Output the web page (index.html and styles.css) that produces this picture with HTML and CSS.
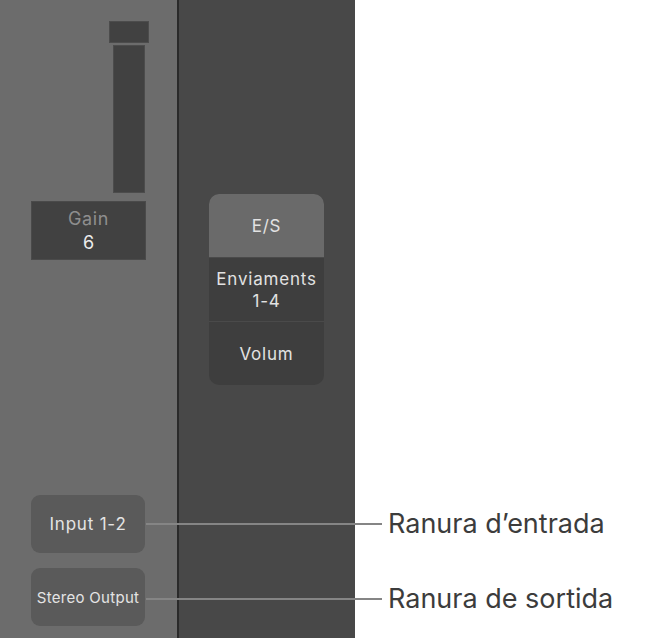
FILE: index.html
```html
<!DOCTYPE html>
<html lang="ca">
<head>
    <meta charset="UTF-8">
    <meta name="viewport" content="width=device-width, initial-scale=1.0">
    <title>Canal</title>
    <link rel="stylesheet" href="styles.css">
</head>
<body>
    <div class="stage">
        <div class="strip strip-left">
            <div class="fader">
                <div class="fader-cap"></div>
                <div class="fader-track"></div>
            </div>
            <div class="gain">
                <span class="gain-label">Gain</span>
                <span class="gain-value">6</span>
            </div>
            <div class="slots">
                <div class="slot">Input 1-2</div>
                <div class="slot slot-small">Stereo Output</div>
            </div>
        </div>

        <div class="divider"></div>

        <div class="strip strip-right">
            <div class="modes">
                <div class="mode mode-active">E/S</div>
                <div class="mode">Enviaments<br>1-4</div>
                <div class="mode">Volum</div>
            </div>
        </div>

        <!-- callouts for the two slots -->
        <div class="callout callout-in">
            <span class="leader"></span>
            <span class="callout-text">Ranura d’entrada</span>
        </div>
        <div class="callout callout-out">
            <span class="leader"></span>
            <span class="callout-text">Ranura de sortida</span>
        </div>
    </div>
</body>
</html>
```

FILE: styles.css
```css
body {
    margin: 0;
    padding: 0;
    background: #fff;
    font-family: 'Inter', 'Noto Sans', sans-serif;
}

.stage {
    position: relative;
    display: flex;
    width: 646px;
    height: 638px;
}

.strip {
    height: 638px;
    display: flex;
    flex-direction: column;
    box-sizing: border-box;
}

.strip-left {
    width: 177px;
    background: #6c6c6c;
    padding: 21px 0 0 31px;
}

.divider {
    width: 2px;
    background: #2a2a2a;
}

.strip-right {
    width: 176px;
    background: #484848;
    padding: 194px 0 0 30px;
}

/* fader */
.fader {
    display: flex;
    flex-direction: column;
    align-items: center;
    width: 40px;
    margin-left: 78px;
}

.fader-cap {
    width: 40px;
    height: 22px;
    background: #414141;
    box-sizing: border-box;
    border: 1px solid #4c4c4c;
}

.fader-track {
    width: 32px;
    height: 148px;
    margin-top: 2px;
    background: #414141;
    box-sizing: border-box;
    border: 1px solid #4c4c4c;
}

.gain {
    width: 115px;
    height: 59px;
    margin-top: 8px;
    background: #414141;
    box-sizing: border-box;
    border: 1px solid #4a4a4a;
    display: flex;
    flex-direction: column;
    align-items: center;
    justify-content: center;
    line-height: 24px;
}

.gain-label {
    color: #8e8e8e;
    font-size: 18px;
    letter-spacing: 0.6px;
}

.gain-value {
    color: #ececec;
    font-size: 18px;
}

/* I/O slots */
.slots {
    margin-top: 235px;
    display: flex;
    flex-direction: column;
    gap: 15px;
}

.slot {
    width: 114px;
    height: 58px;
    box-sizing: border-box;
    border-radius: 9px;
    background: #5a5a5a;
    color: #e4e4e4;
    font-size: 17px;
    letter-spacing: 0.8px;
    display: flex;
    align-items: center;
    justify-content: center;
}

.slot-small {
    font-size: 15px;
    letter-spacing: 0.3px;
}

/* mode buttons */
.modes {
    width: 115px;
    border-radius: 10px;
    overflow: hidden;
    background: #3e3e3e;
}

.mode {
    height: 63px;
    display: flex;
    align-items: center;
    justify-content: center;
    text-align: center;
    color: #e2e2e2;
    font-size: 17px;
    letter-spacing: 0.8px;
    line-height: 22px;
    border-top: 1px solid #4a4a4a;
}

.mode-active {
    background: #6a6a6a;
    border-top: none;
}

/* annotation leaders */
.callout {
    position: absolute;
    left: 146px;
    display: flex;
    align-items: center;
}

.callout-in {
    top: 507px;
}

.callout-out {
    top: 582px;
}

.leader {
    width: 236px;
    height: 2px;
    background: #858585;
}

.callout-text {
    margin-left: 6px;
    color: #3c3c3c;
    font-size: 27px;
    line-height: 34px;
}
```
